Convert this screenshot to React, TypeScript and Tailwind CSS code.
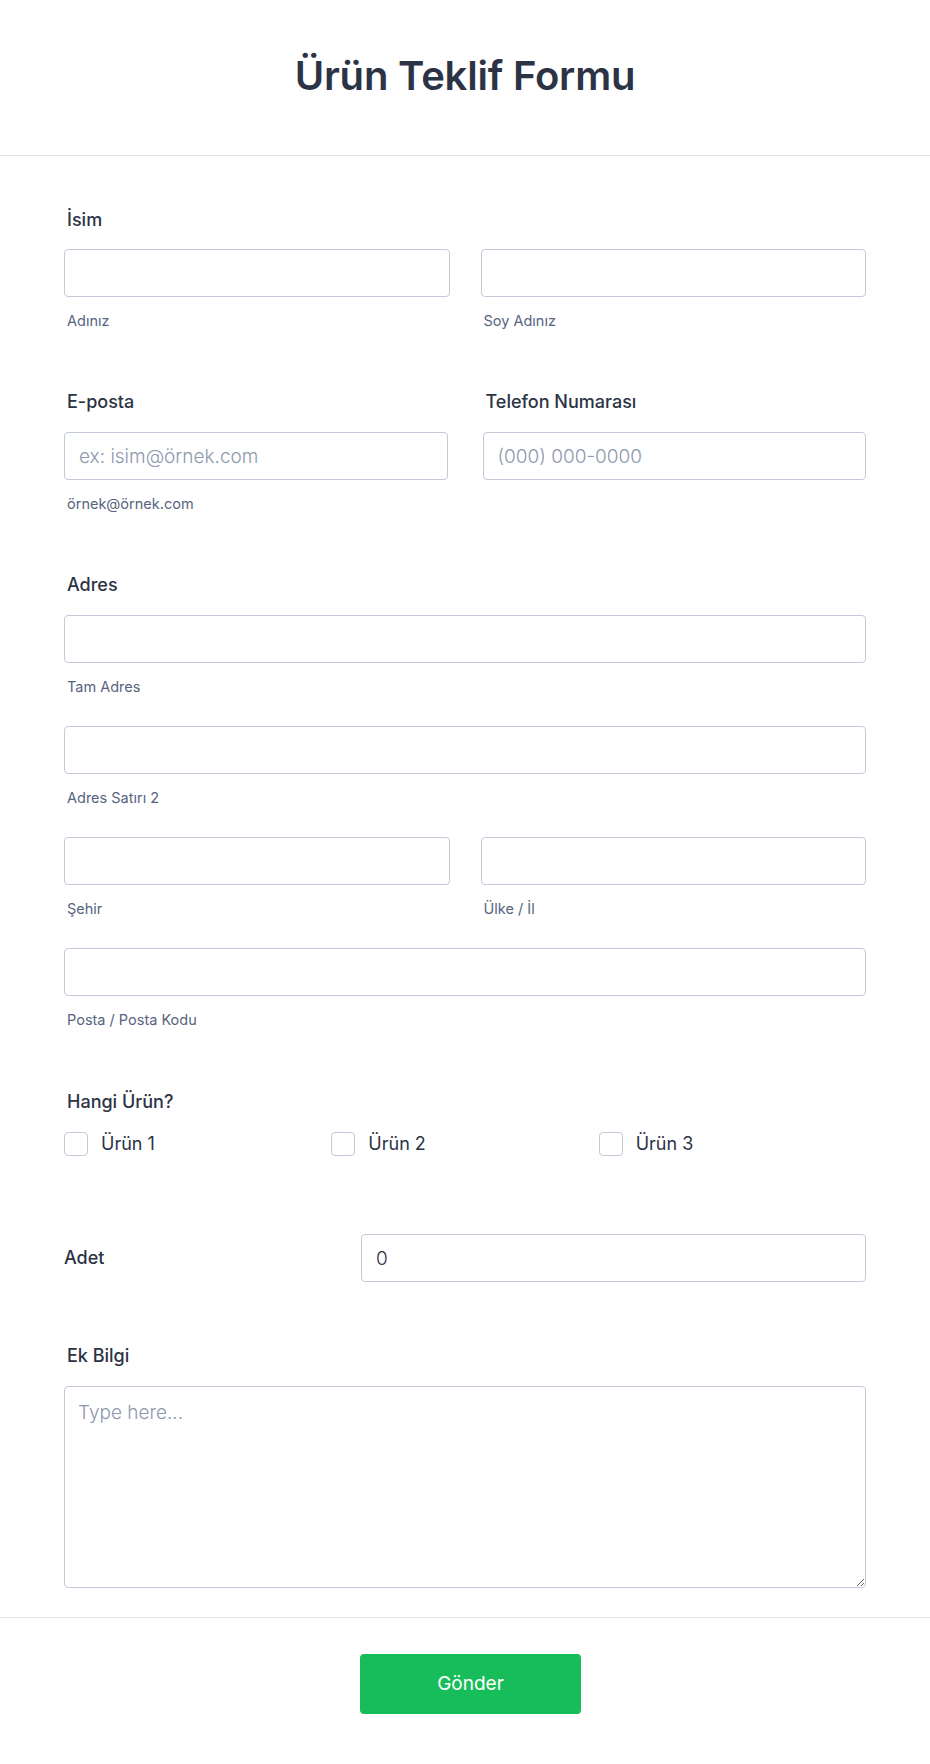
import React from "react";

const font = { fontFamily: "Inter, 'Noto Sans', 'Liberation Sans', sans-serif" };

function Label({ children }: { children: React.ReactNode }) {
  return <div className="text-[18px] leading-[24px] font-medium text-[#2c3345] pl-[3px]">{children}</div>;
}

function Sub({ children }: { children: React.ReactNode }) {
  return <div className="mt-[14px] text-[14.5px] leading-[20px] text-[#57647e] pl-[3px]">{children}</div>;
}

function Input({ placeholder, value }: { placeholder?: string; value?: string }) {
  return (
    <input
      className="block w-full h-[48px] rounded-[4px] border border-[#c3cad8] bg-white px-[14px] text-[19px] font-light text-[#2c3345] placeholder:text-[#8d98ae] outline-none"
      placeholder={placeholder}
      defaultValue={value}
      style={font}
    />
  );
}

function Check({ label }: { label: string }) {
  return (
    <label className="flex items-center gap-[13px]">
      <span className="block w-[24px] h-[24px] rounded-[4px] border border-[#c3cad8] bg-white" />
      <span className="text-[18px] leading-[24px] text-[#2c3345]">{label}</span>
    </label>
  );
}

export default function App() {
  return (
    <div className="bg-white min-h-[1764px] w-full" style={font}>
      <header className="h-[156px] flex items-center justify-center border-b border-[#e3e5ea] pb-[3px]">
        <h1 className="text-[40px] font-semibold text-[#2c3345] tracking-[-0.2px]">Ürün Teklif Formu</h1>
      </header>

      <main className="px-[64px] pt-[52px]">
        {/* İsim */}
        <section>
          <Label>İsim</Label>
          <div className="mt-[17px] grid grid-cols-2 gap-x-[31px]">
            <div>
              <Input />
              <Sub>Adınız</Sub>
            </div>
            <div>
              <Input />
              <Sub>Soy Adınız</Sub>
            </div>
          </div>
        </section>

        {/* E-posta / Telefon */}
        <section className="mt-[59px] grid grid-cols-2 gap-x-[35px]">
          <div>
            <Label>E-posta</Label>
            <div className="mt-[18px]">
              <Input placeholder="ex: isim@örnek.com" />
            </div>
            <Sub>örnek@örnek.com</Sub>
          </div>
          <div>
            <Label>Telefon Numarası</Label>
            <div className="mt-[18px]">
              <Input placeholder="(000) 000-0000" />
            </div>
          </div>
        </section>

        {/* Adres */}
        <section className="mt-[59px]">
          <Label>Adres</Label>
          <div className="mt-[18px]">
            <Input />
            <Sub>Tam Adres</Sub>
          </div>
          <div className="mt-[29px]">
            <Input />
            <Sub>Adres Satırı 2</Sub>
          </div>
          <div className="mt-[29px] grid grid-cols-2 gap-x-[31px]">
            <div>
              <Input />
              <Sub>Şehir</Sub>
            </div>
            <div>
              <Input />
              <Sub>Ülke / İl</Sub>
            </div>
          </div>
          <div className="mt-[29px]">
            <Input />
            <Sub>Posta / Posta Kodu</Sub>
          </div>
        </section>

        {/* Hangi Ürün */}
        <section className="mt-[60px]">
          <Label>Hangi Ürün?</Label>
          <div className="mt-[18px] grid grid-cols-3">
            <Check label="Ürün 1" />
            <Check label="Ürün 2" />
            <Check label="Ürün 3" />
          </div>
        </section>

        {/* Adet */}
        <section className="mt-[78px] flex items-center">
          <div className="w-[297px] text-[18px] leading-[24px] font-medium text-[#2c3345]">Adet</div>
          <div className="flex-1">
            <Input value="0" />
          </div>
        </section>

        {/* Ek Bilgi */}
        <section className="mt-[62px]">
          <Label>Ek Bilgi</Label>
          <textarea
            className="mt-[18px] block w-full h-[202px] rounded-[4px] border border-[#c3cad8] bg-white px-[13px] py-[12px] text-[19px] font-light text-[#2c3345] placeholder:text-[#8d98ae] outline-none"
            placeholder="Type here..."
            style={font}
          />
        </section>
      </main>

      <footer className="mt-[29px] border-t border-[#e3e5ea] flex justify-center pt-[36px] pb-[50px] pl-[11px]">
        <button className="w-[221px] h-[60px] rounded-[4px] bg-[#18bd5b] text-white text-[19px] font-normal">
          Gönder
        </button>
      </footer>
    </div>
  );
}
